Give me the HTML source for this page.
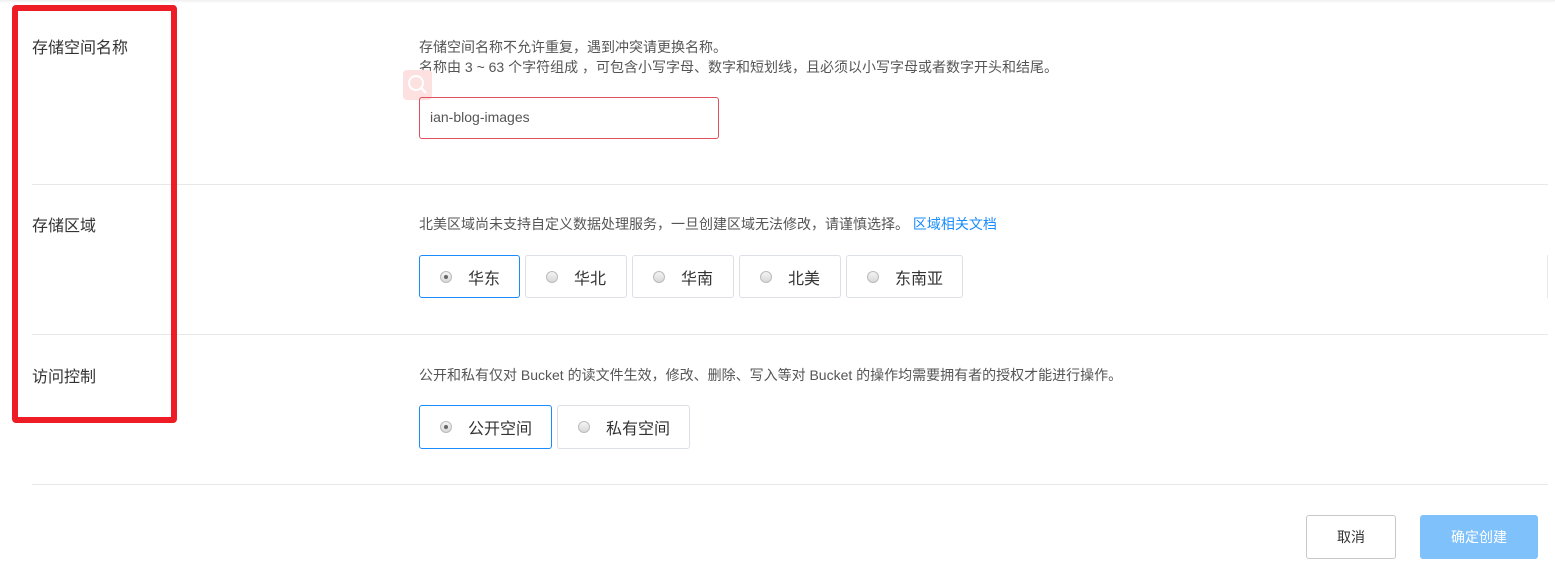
<!DOCTYPE html>
<html><head><meta charset="utf-8"><style>
*{margin:0;padding:0;box-sizing:border-box}
body{width:1555px;height:571px;background:#fff;position:relative;overflow:hidden;font-family:"Liberation Sans","Noto Sans CJK SC",sans-serif;color:#333}
.a{position:absolute}
.lbl{font-size:16px;color:#333;left:32px}
.desc{font-size:14px;color:#555;left:419px;line-height:20px}
.hr{left:32px;width:1516px;height:1px;background:#e8e8e8}
.rb{position:absolute;height:43px;border:1px solid #dcdfe6;border-radius:3px;font-size:16px;color:#333;display:flex;align-items:center;padding-left:20px;background:#fff}
.rb.on{border-color:#1a8cff}
.rb i{width:12px;height:12px;border-radius:50%;border:1px solid #bbb;background:linear-gradient(#f4f4f4,#d8d8d8);margin-right:16px;position:relative;display:inline-block}
.rb.on i:after{content:"";position:absolute;left:3px;top:3px;width:4px;height:4px;border-radius:50%;background:#666}
</style></head><body>
<div class="a" style="left:0;top:0;width:1555px;height:3px;background:linear-gradient(#eee,#fff)"></div>
<div class="a lbl" style="top:34px">存储空间名称</div>
<div class="a lbl" style="top:212px">存储区域</div>
<div class="a lbl" style="top:363px">访问控制</div>
<div class="a desc" style="top:37px">存储空间名称不允许重复，遇到冲突请更换名称。<br>名称由 3 ~ 63 个字符组成 ，可包含小写字母、数字和短划线，且必须以小写字母或者数字开头和结尾。</div>
<div class="a" style="left:403px;top:70px;width:29px;height:30px;background:#fde0e0;border-radius:4px">
<svg width="29" height="30"><circle cx="13" cy="13" r="7" fill="none" stroke="#fff" stroke-width="2"/><line x1="18" y1="18" x2="23" y2="23" stroke="#fff" stroke-width="2.5"/></svg></div>
<div class="a" style="left:419px;top:97px;width:300px;height:42px;border:1px solid #e0505e;border-radius:3px;font-size:14px;color:#555;padding:11px 0 0 10px">ian-blog-images</div>
<div class="a hr" style="top:184px"></div>
<div class="a desc" style="top:214px">北美区域尚未支持自定义数据处理服务，一旦创建区域无法修改，请谨慎选择。 <span style="color:#1a8cff">区域相关文档</span></div>
<div class="rb on" style="left:419px;top:255px;width:101px"><i></i>华东</div>
<div class="rb" style="left:525px;top:255px;width:102px"><i></i>华北</div>
<div class="rb" style="left:632px;top:255px;width:102px"><i></i>华南</div>
<div class="rb" style="left:739px;top:255px;width:102px"><i></i>北美</div>
<div class="rb" style="left:846px;top:255px;width:117px"><i></i>东南亚</div>
<div class="a" style="left:1547px;top:255px;width:1px;height:43px;background:#e8e8e8"></div>
<div class="a hr" style="top:334px"></div>
<div class="a desc" style="top:365px">公开和私有仅对 Bucket 的读文件生效，修改、删除、写入等对 Bucket 的操作均需要拥有者的授权才能进行操作。</div>
<div class="rb on" style="left:419px;top:405px;width:133px;height:44px"><i></i>公开空间</div>
<div class="rb" style="left:557px;top:405px;width:133px;height:44px"><i></i>私有空间</div>
<div class="a hr" style="top:484px"></div>
<div class="a" style="left:1306px;top:515px;width:90px;height:44px;border:1px solid #c8c8c8;border-radius:3px;font-size:14px;color:#333;text-align:center;line-height:42px">取消</div>
<div class="a" style="left:1420px;top:515px;width:118px;height:44px;background:#7fc1fb;border-radius:3px;font-size:14px;color:#fff;text-align:center;line-height:44px">确定创建</div>
<div class="a" style="left:12px;top:5px;width:165px;height:418px;border:6px solid #ee1c25;border-radius:4px;z-index:5"></div>
</body></html>
